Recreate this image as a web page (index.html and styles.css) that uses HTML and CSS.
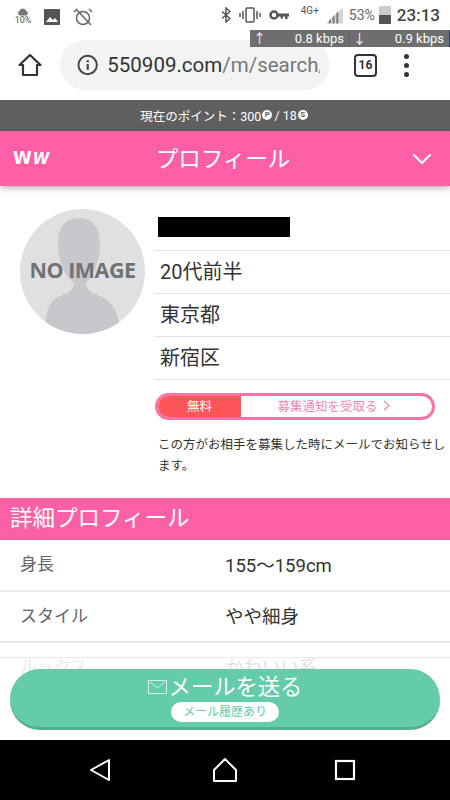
FILE: index.html
```html
<!DOCTYPE html>
<html lang="ja">
<head>
  <meta charset="UTF-8" />
  <meta name="viewport" content="width=device-width, initial-scale=1.0" />
  <title>プロフィール</title>
  <link rel="stylesheet" href="styles.css">
</head>
<body>
  <div class="status-bar">
    <div class="status-left">
      <div class="weather">
        <svg width="12" height="8" viewBox="0 0 14 8"><path d="M3 8a3 3 0 0 1 0-5.500 4 4 0 0 1 7.500 0A3 3 0 0 1 11 8z" fill="#777"/></svg>
        <span>10%</span>
      </div>
      <svg width="16" height="16" viewBox="0 0 16 16"><rect width="16" height="16" rx="1" fill="#555"/><path d="M2 13l4-5 3 3 2-2 3 4z" fill="#fff"/></svg>
      <svg width="20" height="20" viewBox="0 0 20 20" fill="none" stroke="#666" stroke-width="1.500"><circle cx="10" cy="11" r="6.500"/><path d="M1 5l3-3M19 5l-3-3M3 2l15 16"/></svg>
    </div>
    <div class="status-right">
      <svg width="10" height="16" viewBox="0 0 10 16" fill="none" stroke="#555" stroke-width="1.500"><path d="M1 4.500l8 7-4 3.500V1l4 3.500-8 7"/></svg>
      <svg class="vib" width="24" height="16" viewBox="0 0 24 16" fill="none" stroke="#555" stroke-width="1.500"><rect x="8" y="1" width="8" height="14" rx="1"/><path d="M5 4v8M19 4v8M2 6v4M22 6v4"/></svg>
      <svg class="key" width="20" height="10" viewBox="0 0 20 10"><circle cx="5" cy="5" r="3.500" fill="none" stroke="#555" stroke-width="2.500"/><path d="M8 3.500h12v3h-1.500v2.500h-2.500v-2.500h-2v2h-2.500v-2H8z" fill="#555"/></svg>
      <span class="net">4G+</span>
      <svg class="signal" width="17" height="17" viewBox="0 0 18 17"><path d="M0 17l18-17v17z" fill="#d4d4d4"/><path d="M3 17v-3l2-2v5zM7 17v-7l2-2v9zM11 17V6l2-2v13z" fill="#777"/></svg>
      <span class="battery-pct">53%</span>
      <div class="battery"><div class="battery-fill"></div></div>
      <span class="clock">23:13</span>
    </div>
    <div class="speed">
      <div class="speed-cell speed-up"><span>↑</span><span>0.8 kbps</span></div>
      <div class="speed-cell speed-down"><span>↓</span><span>0.9 kbps</span></div>
    </div>
  </div>

  <div class="toolbar">
    <svg class="home-icon" width="24" height="24" viewBox="0 0 24 24" fill="none" stroke="#333" stroke-width="2.200" stroke-linejoin="round"><path d="M1.500 12L12 2l10.500 10H19v10H5V12z"/></svg>
    <div class="url-box">
      <svg width="22" height="22" viewBox="0 0 22 22" fill="none"><circle cx="11" cy="11" r="9.500" stroke="#444" stroke-width="2"/><rect x="10" y="10" width="2.200" height="6" fill="#444"/><rect x="10" y="6" width="2.200" height="2.200" fill="#444"/></svg>
      <span class="url"><span class="url-host">550909.com</span>/m/search/</span>
    </div>
    <div class="tabs">16</div>
    <div class="dots"><i></i><i></i><i></i></div>
  </div>

  <div class="points">現在のポイント：300<span class="coin">P</span>/ 18<span class="coin">S</span></div>

  <header class="site-header">
    <div class="logo"><span class="logo-big">W</span><span class="logo-small">W</span></div>
    <h1>プロフィール</h1>
    <svg width="20" height="12" viewBox="0 0 20 12" fill="none" stroke="#fff" stroke-width="2.200"><path d="M1.500 1.500L10 10l8.500-8.500"/></svg>
  </header>

  <section class="profile">
    <div class="avatar">
      <svg width="125" height="125" viewBox="0 0 125 125">
        <rect width="125" height="125" fill="#dfe0e2"/>
        <path d="M25 125C25 105 28 92 40 87c10-3 14-7 14-13C44 66 38 50 38 35 38 18 46 9 59 9s21 9 21 26c0 15-6 31-14 39 0 6 4 10 14 13 12 5 20 18 20 38z" fill="#c6c8cb"/>
      </svg>
      <span class="no-image">NO IMAGE</span>
    </div>
    <div class="profile-info">
      <ul class="info-list">
        <li class="info-name"><span class="redacted"></span></li>
        <li>20代前半</li>
        <li>東京都</li>
        <li>新宿区</li>
      </ul>
      <a class="notify-btn">
        <span class="notify-free">無料</span>
        <span class="notify-label">募集通知を受取る
          <svg class="notify-arrow" width="7" height="11" viewBox="0 0 7 11" fill="none" stroke="#ee8ab4" stroke-width="1.200"><path d="M1 1l5 4.500L1 10"/></svg>
        </span>
      </a>
      <p class="notify-note">この方がお相手を募集した時にメールでお知らせします。</p>
    </div>
  </section>

  <h2 class="section-title">詳細プロフィール</h2>
  <dl class="detail">
    <div class="detail-row"><dt>身長</dt><dd>155〜159cm</dd></div>
    <div class="detail-row"><dt>スタイル</dt><dd>やや細身</dd></div>
    <div class="detail-row"><dt>ルックス</dt><dd>かわいい系</dd></div>
  </dl>

  <div class="mail-bar">
    <a class="mail-btn">
      <span class="mail-main">
        <svg width="19" height="14" viewBox="0 0 19 14" fill="none" stroke="#d8f3ea" stroke-width="1"><rect x=".5" y=".5" width="18" height="13"/><path d="M2 2l7.500 6L17 2"/></svg>
        メールを送る
      </span>
      <span class="mail-sub">メール履歴あり</span>
    </a>
  </div>

  <nav class="nav-bar">
    <svg width="22" height="24" viewBox="0 0 22 24" fill="none" stroke="#fff" stroke-width="2" stroke-linejoin="round"><path d="M20 2v20L2 12z"/></svg>
    <svg class="nav-home" width="26" height="26" viewBox="0 0 26 26" fill="none" stroke="#fff" stroke-width="2" stroke-linejoin="round"><path d="M13 2l11 11v11H2V13z"/></svg>
    <svg width="22" height="22" viewBox="0 0 22 22" fill="none" stroke="#fff" stroke-width="2.200"><rect x="2" y="2" width="18" height="18"/></svg>
  </nav>
</body>
</html>
```

FILE: styles.css
```css
:root {
  --pink: #fb5fa5;
  --green: #64cbab;
  --line: #e2e2e2;
  --text: #333;
}

* {
  box-sizing: border-box;
  margin: 0;
  padding: 0;
}

html, body {
  width: 450px;
  height: 800px;
  overflow: hidden;
}

body {
  position: relative;
  background: #fff;
  color: var(--text);
  font-family: Roboto, "Noto Sans CJK JP", sans-serif;
}

/* status bar */
.status-bar {
  position: relative;
  display: flex;
  justify-content: space-between;
  height: 30px;
  padding: 0 10px 0 15px;
  color: #555;
}

.status-left {
  display: flex;
  align-items: center;
  gap: 13px;
  padding-top: 3px;
}

.weather {
  display: flex;
  flex-direction: column;
  align-items: center;
  width: 16px;
  font-size: 9px;
  line-height: 9px;
  color: #555;
}

.status-right {
  display: flex;
  align-items: center;
}

.vib { margin-left: 7px; }
.key { margin-left: 7px; }

.net {
  align-self: flex-start;
  margin: 5px 0 0 12px;
  font-size: 10px;
}

.signal { margin-left: 7px; }

.battery-pct {
  margin-left: 6px;
  font-size: 14px;
  color: #666;
}

.battery {
  position: relative;
  width: 12px;
  height: 18px;
  margin-left: 4px;
  background: #ccc;
  border-radius: 1px 1px 0 0;
}

.battery-fill {
  position: absolute;
  left: 0;
  right: 0;
  bottom: 0;
  height: 9px;
  background: #555;
}

.clock {
  margin-left: 6px;
  font-size: 17px;
  font-weight: 500;
  color: #444;
}

.speed {
  position: absolute;
  top: 30px;
  right: 0;
  display: flex;
  width: 200px;
  height: 17px;
  background: #6e6e6e;
  color: #fff;
  font-size: 13px;
  line-height: 17px;
  z-index: 2;
}

.speed-cell {
  display: flex;
  justify-content: space-between;
  padding: 0 5px 0 3px;
}

.speed-up {
  width: 100px;
  border-right: 1px solid #c8334a;
}

.speed-down {
  width: 100px;
  border-right: 1px solid #2233bb;
}

/* browser toolbar */
.toolbar {
  display: flex;
  align-items: center;
  height: 70px;
  padding: 0 24px 0 18px;
}

.url-box {
  display: flex;
  align-items: center;
  gap: 9px;
  width: 270px;
  height: 50px;
  margin-left: 18px;
  padding: 0 10px 0 17px;
  background: #f1f3f4;
  border-radius: 25px;
  overflow: hidden;
}

.url {
  font-size: 20.500px;
  color: #777;
  white-space: nowrap;
  overflow: hidden;
}

.url-host { color: #333; }

.tabs {
  width: 23px;
  height: 23px;
  margin-left: 24px;
  border: 2.500px solid #333;
  border-radius: 4px;
  font-size: 12px;
  font-weight: 700;
  line-height: 18px;
  text-align: center;
}

.dots {
  display: flex;
  flex-direction: column;
  gap: 4px;
  margin-left: 27px;
}

.dots i {
  display: block;
  width: 5px;
  height: 5px;
  background: #333;
  border-radius: 50%;
}

/* points */
.points {
  display: flex;
  align-items: center;
  justify-content: center;
  height: 31px;
  padding-bottom: 1px;
  background: #5f5f5f;
  color: #fff;
  font-size: 12.500px;
}

.coin {
  width: 10px;
  height: 10px;
  margin: 0 2px 0 1px;
  background: #fff;
  border-radius: 50%;
  color: #5f5f5f;
  font-size: 8px;
  font-weight: 700;
  line-height: 10px;
  text-align: center;
}

/* page header */
.site-header {
  display: flex;
  align-items: center;
  justify-content: space-between;
  height: 55px;
  padding: 0 18px 0 13px;
  background: var(--pink);
  box-shadow: 0 2px 6px rgba(0, 0, 0, .3);
  color: #fff;
}

.site-header h1 {
  padding-bottom: 4px;
  font-size: 22.500px;
  font-weight: 400;
}

.logo {
  width: 21px;
  font-family: "DejaVu Sans", sans-serif;
  font-weight: 700;
  line-height: 1;
  white-space: nowrap;
}

.logo-big { font-size: 17px; }

.logo-small {
  margin-left: 1px;
  font-size: 15px;
  font-style: italic;
}

/* profile */
.profile {
  display: flex;
  padding: 23px 0 0 20px;
}

.avatar {
  position: relative;
  flex: none;
  width: 125px;
  height: 125px;
}

.avatar svg {
  display: block;
  border-radius: 50%;
}

.no-image {
  position: absolute;
  left: -2px;
  right: -2px;
  top: 47px;
  color: #707276;
  font-family: "Open Sans", sans-serif;
  font-size: 21.500px;
  font-weight: 700;
  letter-spacing: -.5px;
  line-height: 27px;
  text-align: center;
}

.profile-info {
  flex: 1;
  margin-left: 10px;
}

.info-list {
  list-style: none;
}

.info-list li {
  display: flex;
  align-items: center;
  height: 43px;
  padding: 0 0 3px 5px;
  border-bottom: 1px solid var(--line);
  font-size: 20px;
}

.info-list .info-name {
  height: 42px;
  padding: 0 0 6px 3px;
}

.redacted {
  display: block;
  width: 132px;
  height: 20px;
  background: #000;
}

.notify-btn {
  display: flex;
  width: 280px;
  height: 27px;
  margin-top: 13px;
  border: 3px solid #fc72a6;
  border-radius: 14px;
  overflow: hidden;
  font-size: 12.500px;
  line-height: 21px;
}

.notify-free {
  width: 83px;
  background: #ff5558;
  color: #fff;
  text-align: center;
}

.notify-label {
  flex: 1;
  padding-right: 6px;
  color: #ee8ab4;
  text-align: center;
}

.notify-arrow { margin-left: 2px; }

.notify-note {
  margin-top: 14px;
  padding-left: 3px;
  font-size: 12.500px;
  line-height: 21px;
}

/* detail */
.section-title {
  height: 42px;
  margin-top: 22px;
  padding-left: 10px;
  background: var(--pink);
  color: #fff;
  font-size: 22.500px;
  font-weight: 400;
  line-height: 41px;
}

.detail-row {
  display: flex;
  height: 51px;
  padding-left: 20px;
  border-bottom: 2px solid #e8e8e8;
  align-items: center;
  font-size: 18.500px;
}

.detail-row:first-child { height: 52px; }

.detail-row dt {
  width: 205px;
  padding-bottom: 5px;
  color: #666;
  font-size: 17px;
}

.detail-row dd {
  padding-bottom: 3px;
  color: #333;
}

/* floating mail button */
.mail-bar {
  position: absolute;
  left: 0;
  right: 0;
  top: 657px;
  height: 83px;
  padding: 11px 10px 0;
  background: rgba(255, 255, 255, .85);
  border-top: 1px solid #e8e8e8;
}

.mail-btn {
  display: flex;
  flex-direction: column;
  align-items: center;
  height: 61px;
  padding-top: 3px;
  background: var(--green);
  border-bottom: 3px solid #55ad92;
  border-radius: 30px;
  color: #fff;
}

.mail-main {
  display: flex;
  align-items: center;
  gap: 2px;
  height: 30px;
  font-size: 22.300px;
  line-height: 30px;
}

.mail-sub {
  width: 108px;
  height: 20px;
  background: #fff;
  border-radius: 10px;
  color: var(--green);
  font-size: 12px;
  line-height: 20px;
  text-align: center;
}

/* android nav */
.nav-bar {
  position: absolute;
  left: 0;
  right: 0;
  bottom: 0;
  display: flex;
  align-items: center;
  justify-content: space-between;
  height: 60px;
  padding: 0 94px 0 89px;
  background: #000;
}

.nav-home { margin-left: 5px; }
```
